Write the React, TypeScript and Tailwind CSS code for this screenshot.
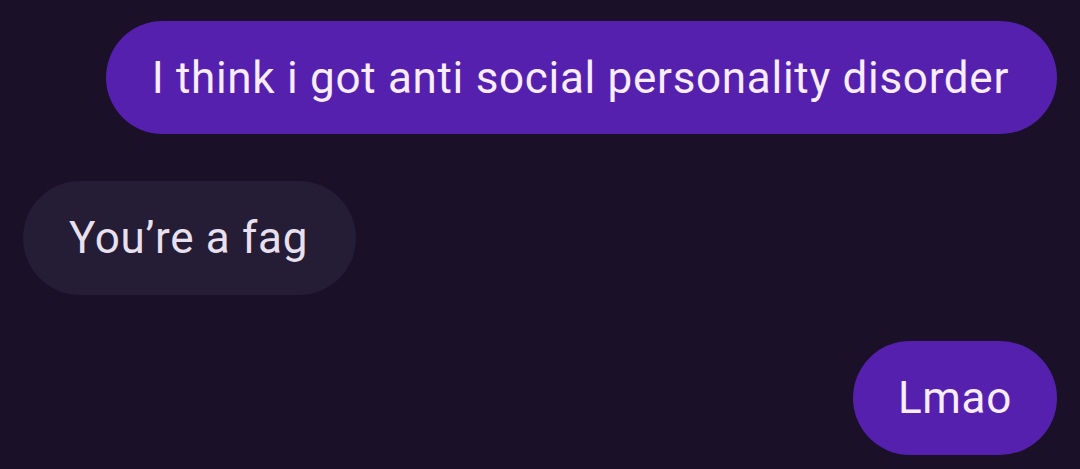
export default function App() {
  const font = { fontFamily: 'Roboto, "Noto Sans", sans-serif' };
  return (
    <div
      className="w-[1080px] h-[469px] bg-[#1a1028] flex flex-col px-[23px] pt-[21px] gap-[47px] overflow-hidden"
      style={font}
    >
      <div className="flex justify-end">
        <div className="h-[113px] rounded-full bg-[#5620ae] text-[#f8ecff] text-[44px] flex items-center pl-[46px] pr-[48px] tracking-[0.7px]">
          I think i got anti social personality disorder
        </div>
      </div>
      <div className="flex justify-start">
        <div className="h-[114px] rounded-full bg-[#251c35] text-[#e8e0ee] text-[44px] flex items-center pl-[46px] pr-[48px] tracking-[0.7px]">
          You’re a fag
        </div>
      </div>
      <div className="flex justify-end -mt-[1px]">
        <div className="h-[114px] rounded-full bg-[#5620ae] text-[#f8ecff] text-[44px] flex items-center pl-[45px] pr-[45px] tracking-[0.7px]">
          Lmao
        </div>
      </div>
    </div>
  );
}
